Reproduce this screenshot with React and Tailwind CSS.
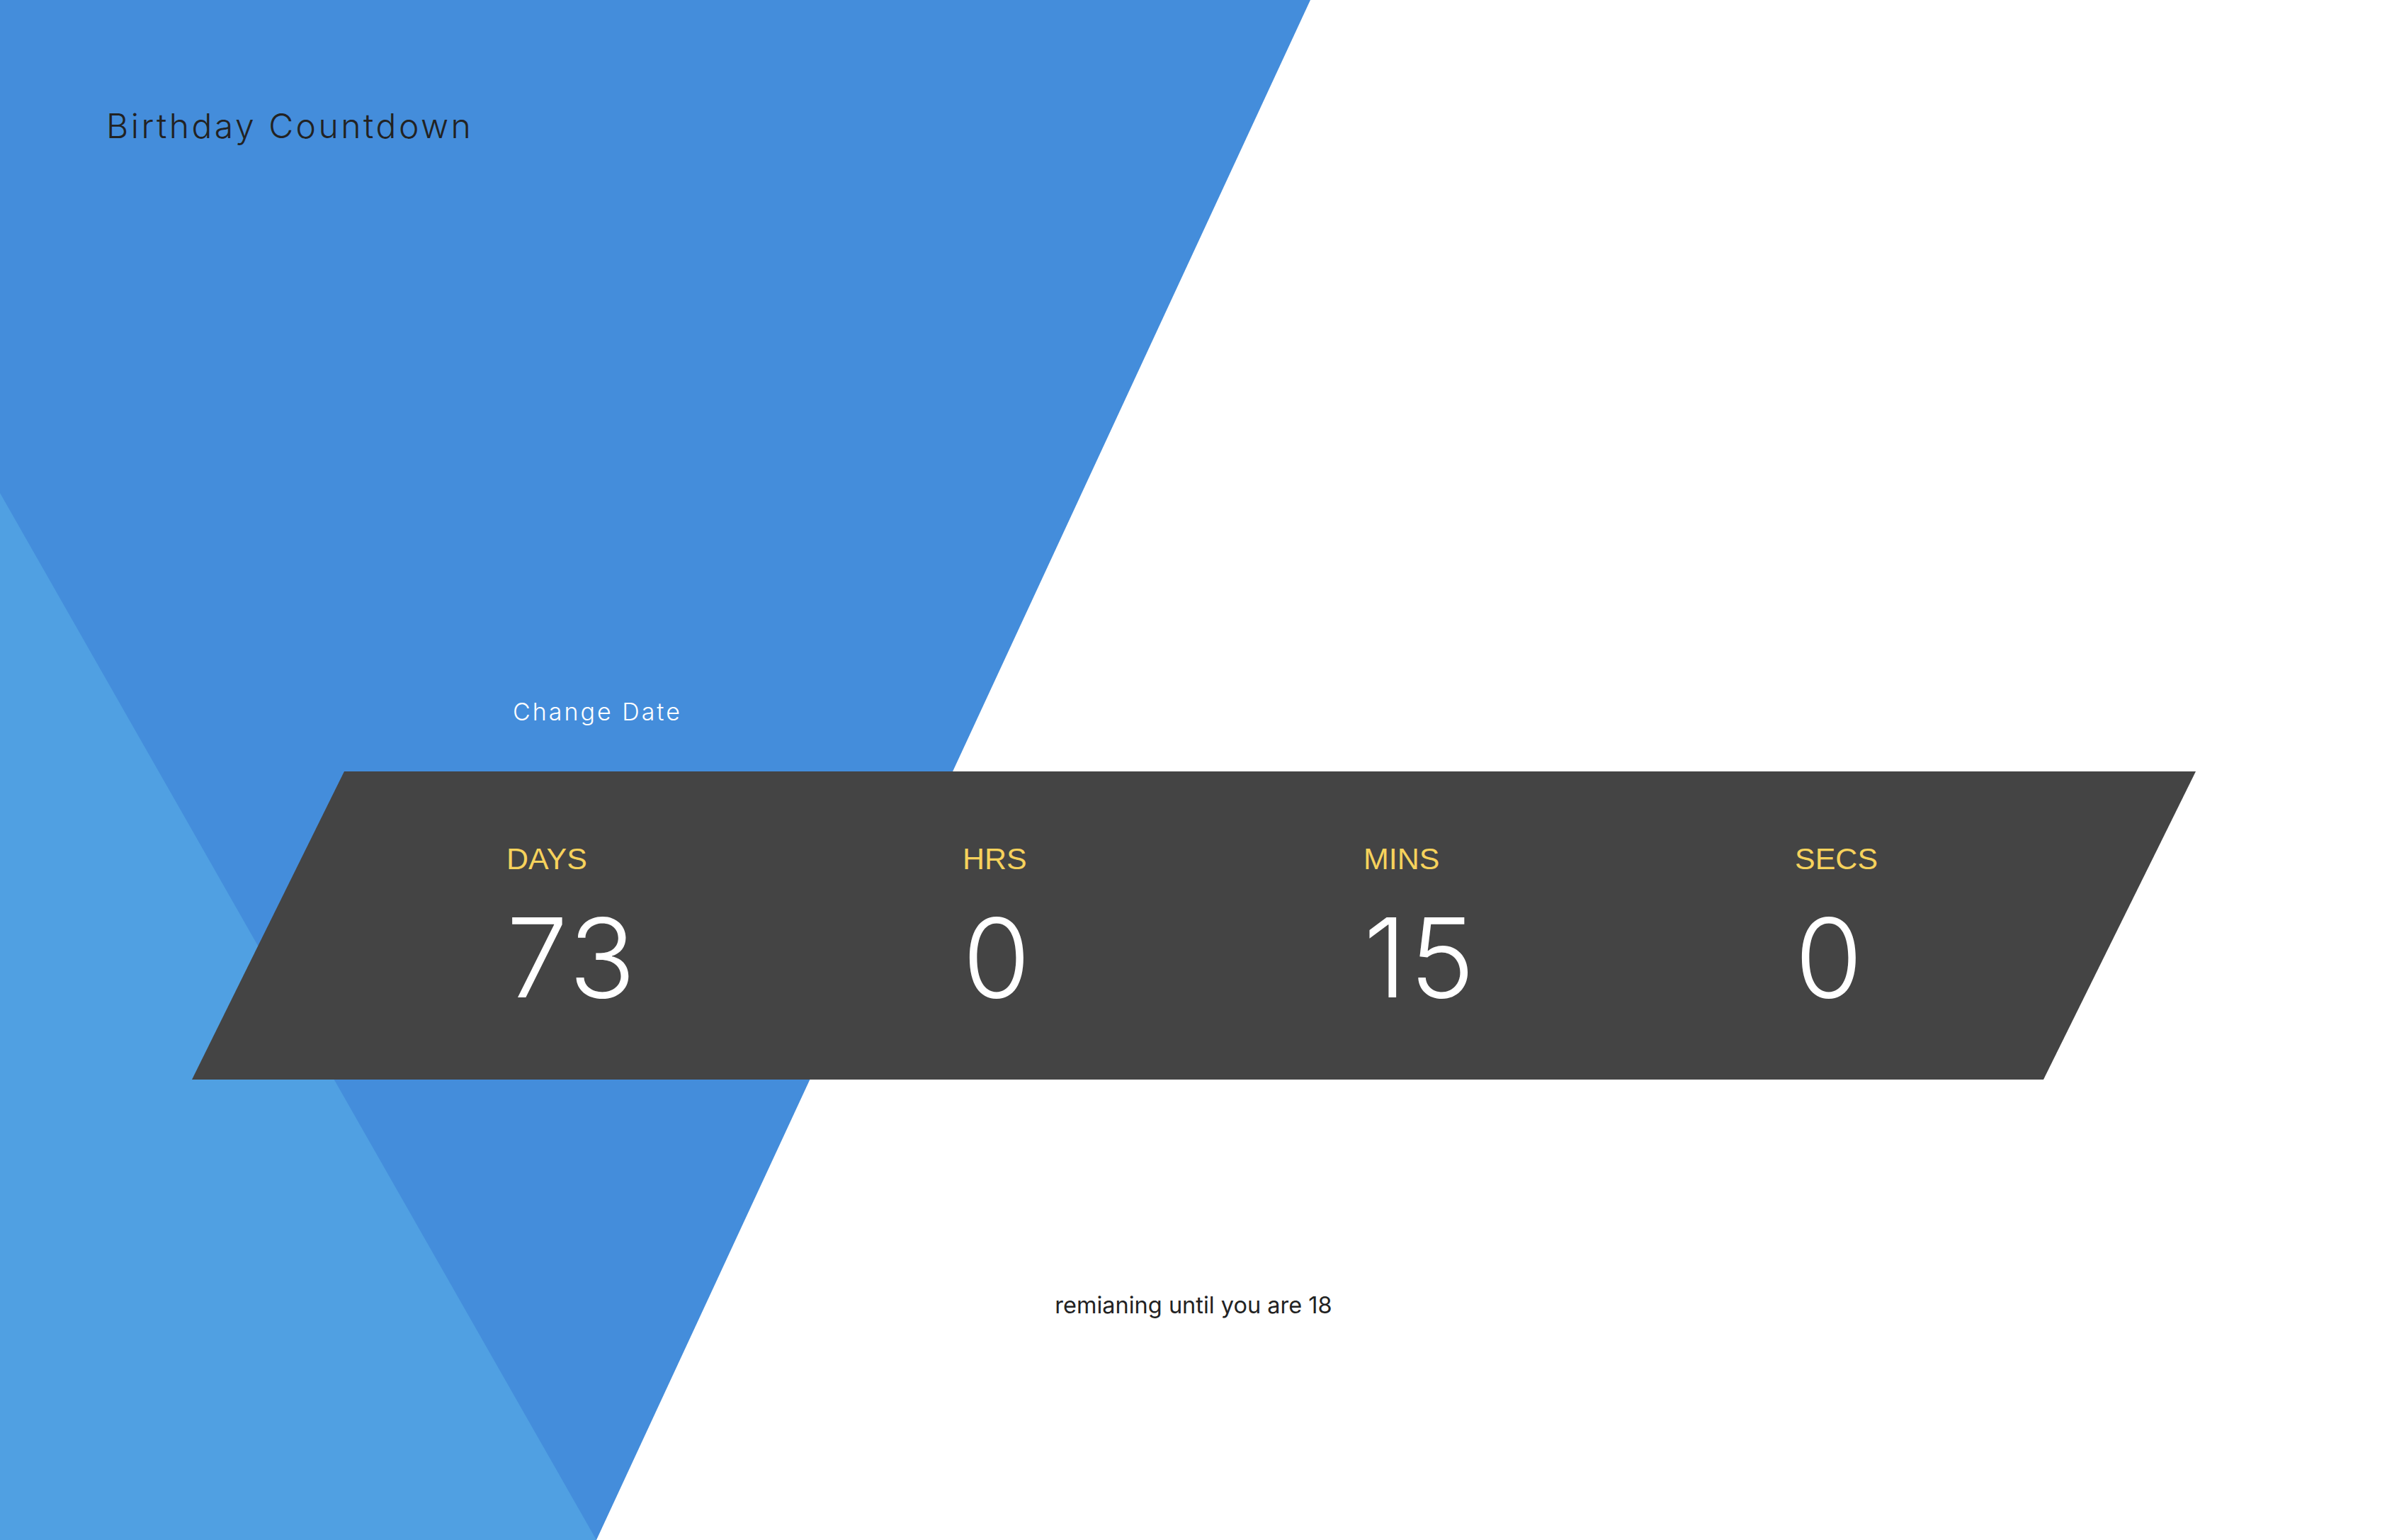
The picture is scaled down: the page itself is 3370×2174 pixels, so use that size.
export default function App() {
  const units = [
    { label: 'DAYS', value: 73, w: 'w-[644px]' },
    { label: 'HRS', value: 0, w: 'w-[566px]' },
    { label: 'MINS', value: 15, w: 'w-[609px]' },
    { label: 'SECS', value: 0, w: 'w-auto' },
  ];

  return (
    <div className="relative w-full h-screen overflow-hidden bg-white font-['Inter',sans-serif]">
      {/* background shapes */}
      <svg className="absolute inset-0 w-full h-full" viewBox="0 0 3370 2174" preserveAspectRatio="none">
        <polygon points="0,0 1850,0 842,2174 0,2174" fill="#448ddb" />
        <polygon points="0,696 842,2174 0,2174" fill="#50a0e2" />
      </svg>

      <div className="relative flex flex-col">
        <h1 className="pl-[150px] pt-[154px] text-[48px] leading-none font-light tracking-[3.5px] text-[#222]">Birthday Countdown</h1>

        <button className="self-start ml-[724px] mt-[786px] text-[34px] leading-none font-light tracking-[3px] text-white">
          Change Date
        </button>

        <div className="mt-[67px] ml-[271px] w-[2829px] h-[435px] bg-[#444444] [clip-path:polygon(215px_0,100%_0,2614px_100%,0_100%)] flex pl-[444px] pt-[102px]">
          {units.map((u) => (
            <div key={u.label} className={`${u.w} flex flex-col`}>
              <span className="font-['Liberation_Sans',Arial,sans-serif] text-[43px] leading-none text-[#f6d25c]">{u.label}</span>
              <span className="mt-[40px] text-[155px] leading-none font-light tracking-[4px] text-white">{u.value}</span>
            </div>
          ))}
        </div>

        <p className="mt-[303px] text-center text-[32.5px] leading-none text-[#222]">remianing until you are 18</p>
      </div>
    </div>
  );
}
